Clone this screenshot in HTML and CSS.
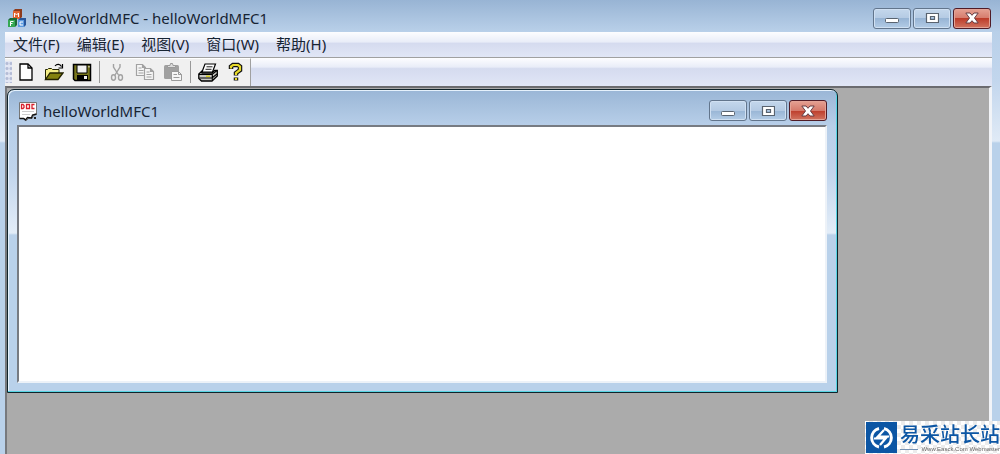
FILE: index.html
```html
<!DOCTYPE html>
<html lang="zh-CN">
  <head>
    <meta charset="UTF-8" />
    <meta name="viewport" content="width=device-width, initial-scale=1.0" />
    <title>helloWorldMFC - helloWorldMFC1</title>
    <link rel="stylesheet" href="styles.css">
  </head>
  <body>
    <div class="frame">
      <header class="titlebar">
        <svg class="app-icon" width="20" height="20" viewBox="0 0 20 20">
          <path d="M6 3l2-2h7v8l-2 2H6z" fill="#8e3b1c" />
          <path d="M6 3h7v8H6z" fill="#e0622e" />
          <path d="M7.500 9V5l2 2 2-2v4" fill="none" stroke="#fff" />
          <path d="M1 12l2-2h7v7l-2 2H1z" fill="#1d6b35" />
          <path d="M1 12h7v7H1z" fill="#35a852" />
          <path d="M3.500 18v-4.500h3M3.500 15.500h2" fill="none" stroke="#fff" />
          <path d="M11 12l2-2h6v7l-2 2h-6z" fill="#28569b" />
          <path d="M11 12h6v7h-6z" fill="#5d9be0" />
          <path d="M16 14h-3v3h3" fill="none" stroke="#fff" />
        </svg>
        <h1 class="title">helloWorldMFC - helloWorldMFC1</h1>
        <div class="controls">
          <button class="ctl" aria-label="最小化">
            <svg width="14" height="12" viewBox="0 0 14 12"><rect x=".5" y="6.500" width="13" height="4" rx="1" fill="#fff" stroke="#59636f" /></svg>
          </button>
          <button class="ctl" aria-label="最大化">
            <svg width="14" height="12" viewBox="0 0 14 12"><path d="M1.500 1.500h12v9h-12zM5.500 4.500v3h4v-3z" fill="#fff" fill-rule="evenodd" stroke="#59636f" stroke-width="1.200" /></svg>
          </button>
          <button class="ctl close" aria-label="关闭">
            <svg width="14" height="12" viewBox="0 0 14 12"><path d="M.8 1h4.200l2 2.300L9 1h4.200L9.500 6l3.700 5H9L7 8.700 5 11H.8l3.700-5z" fill="#fff" stroke="#653c43" /></svg>
          </button>
        </div>
      </header>

      <nav class="menubar">
        <button class="menu-item">文件(F)</button>
        <button class="menu-item">编辑(E)</button>
        <button class="menu-item">视图(V)</button>
        <button class="menu-item">窗口(W)</button>
        <button class="menu-item">帮助(H)</button>
      </nav>

      <div class="toolbar-row">
        <div class="toolbar">
          <span class="grip"></span>
          <button class="tool" aria-label="新建">
            <svg width="20" height="20" viewBox="0 0 20 20"><path d="M4 2h8l4 4v12H4z" fill="#fff" stroke="#000" stroke-width="1.300" /><path d="M12 2v4h4" fill="none" stroke="#000" stroke-width="1.300" /></svg>
          </button>
          <button class="tool" aria-label="打开">
            <svg width="20" height="20" viewBox="0 0 20 20">
              <path d="M1.500 17V7.500h2l1-1h3l1 1H15V11" fill="#f4ee86" stroke="#222200" />
              <path d="M1.500 17.500L6 11h13l-5 6.500z" fill="#84820e" stroke="#222200" stroke-width="1.300" />
              <path d="M11 4c2-2.500 5-2 6.500.5M18.500 2v4h-4" fill="none" stroke="#000" stroke-width="1.200" />
            </svg>
          </button>
          <button class="tool" aria-label="保存">
            <svg width="20" height="20" viewBox="0 0 20 20">
              <path d="M1.500 2.500h17v16H3l-1.500-1.500z" fill="#77751c" stroke="#000" stroke-width="1.500" />
              <path d="M5 3h10v8H5z" fill="#f1f1f1" stroke="#000" />
              <path d="M5 13h11v5H5z" fill="#000" />
              <path d="M12 14h3v3h-3z" fill="#eee" />
              <path d="M16.500 4h1v1.500h-1z" fill="#fff" />
            </svg>
          </button>
          <span class="sep"></span>
          <button class="tool" aria-label="剪切" disabled>
            <svg width="20" height="20" viewBox="0 0 20 20" fill="none" stroke="#a2a2a2" stroke-width="1.400">
              <path d="M6.500 2v3l5 8M13 2v3l-5 8" />
              <ellipse cx="6.500" cy="15.500" rx="2" ry="2.700" /><ellipse cx="13.500" cy="15.500" rx="2" ry="2.700" />
            </svg>
          </button>
          <button class="tool" aria-label="复制" disabled>
            <svg width="20" height="20" viewBox="0 0 20 20" fill="#f5f5f5" stroke="#a2a2a2" stroke-width="1.200">
              <path d="M1.500 2.500h6l3 3v8h-9zM7.500 2.500v3h3M3.500 6h3M3.500 8.500h5M3.500 11h5" />
              <path d="M9.500 6.500h6l3 3v8h-9zM15.500 6.500v3h3M11.500 10h3M11.500 12.500h5M11.500 15h5" />
            </svg>
          </button>
          <button class="tool" aria-label="粘贴" disabled>
            <svg width="20" height="20" viewBox="0 0 20 20">
              <rect x="1" y="3" width="15" height="14" rx="1.500" fill="#a0a0a0" />
              <path d="M4.500 5.500V3.500H7L7.500 1.500h2l.5 2h2.500v2z" fill="#ddd" stroke="#999" />
              <path d="M8.500 9.500h7l3 3v6h-10zM15.500 9.500v3h3M10.500 12.500h3.500M10.500 15.500h6" fill="#f5f5f5" stroke="#999" />
            </svg>
          </button>
          <span class="sep"></span>
          <button class="tool" aria-label="打印">
            <svg width="20" height="20" viewBox="0 0 20 20">
              <path d="M4 10L7 2h10.500l-3 8z" fill="#fff" stroke="#000" stroke-width="1.200" />
              <path d="M8.500 4.800h6M7.500 7.300h6" stroke="#222" />
              <path d="M3.500 9.500L.8 12v4.500L3.500 19H14l5.300-5V8.500h-2.800L14 11H4z" fill="#c9c9c4" stroke="#000" stroke-width="1.300" />
              <path d="M1 12.500h13l5-4M14.300 12.500V18M1.500 16h12.500l5-4" fill="none" stroke="#000" stroke-width="1.100" />
              <path d="M8 14.300h4" stroke="#d6cf22" stroke-width="1.500" />
            </svg>
          </button>
          <button class="tool" aria-label="关于">
            <svg width="20" height="20" viewBox="0 0 20 20">
              <path d="M5 7V4.500L7 3h5l2 1.500V8l-4 3v2.500M10 15.500v3" fill="none" stroke="#111" stroke-width="4.500" />
              <path d="M5 6.500v-2L7 3h5l2 1.500V8l-4 3v2M10 16v2" fill="none" stroke="#e7d929" stroke-width="2.200" />
            </svg>
          </button>
        </div>
      </div>

      <main class="workspace">
        <section class="child">
          <header class="child-titlebar">
            <svg class="doc-icon" width="20" height="20" viewBox="0 0 20 20">
              <path d="M1.500 1.500h17v12l-3 1-1 2.500-4 .5-2 2-2-2H1.500z" fill="#fff" stroke="#777" />
              <path d="M1.500 17.500h4l2 1.500 2-2.500 4 .5 1-3 4-1" fill="none" stroke="#111" stroke-width="1.400" />
              <path d="M3.500 3.500v4h1.500l1-1v-2l-1-1zM8.500 3.500h3v4h-3zM16.500 3.500h-2.500v4h2.500" fill="none" stroke="#d8202c" stroke-width="1.300" />
              <path d="M4 10.500h12M4 13.500h8" stroke="#ccc" />
              <path d="M16 16h2v2h-2z" fill="#222" />
            </svg>
            <h2 class="title">helloWorldMFC1</h2>
            <div class="controls">
              <button class="ctl" aria-label="最小化">
                <svg width="14" height="12" viewBox="0 0 14 12"><rect x=".5" y="6.500" width="13" height="4" rx="1" fill="#fff" stroke="#59636f" /></svg>
              </button>
              <button class="ctl" aria-label="最大化">
                <svg width="14" height="12" viewBox="0 0 14 12"><path d="M1.500 1.500h12v9h-12zM5.500 4.500v3h4v-3z" fill="#fff" fill-rule="evenodd" stroke="#59636f" stroke-width="1.200" /></svg>
              </button>
              <button class="ctl close" aria-label="关闭">
                <svg width="14" height="12" viewBox="0 0 14 12"><path d="M.8 1h4.200l2 2.300L9 1h4.200L9.500 6l3.700 5H9L7 8.700 5 11H.8l3.700-5z" fill="#fff" stroke="#653c43" /></svg>
              </button>
            </div>
          </header>
          <div class="document"></div>
        </section>
      </main>
    </div>

    <div class="watermark">
      <svg class="mark" width="31" height="31" viewBox="0 0 31 31">
        <path d="M0 0h31v31H0z" fill="#0c56a4" />
        <path d="M13 6.500a9.500 9.500 0 0 0 0 18.500M18 6.500a9.500 9.500 0 0 1 0 18.500" fill="none" stroke="#fff" stroke-width="3" />
        <path d="M18 8l-6 6.500h11M8 16.500h11.500L14 23" fill="none" stroke="#fff" stroke-width="2.200" />
      </svg>
      <div class="mark-text">
        <span class="mark-name">易采站长站</span>
        <span class="mark-url">Www.Easck.Com Webmaster</span>
      </div>
    </div>
  </body>
</html>
```
FILE: styles.css
```css
* {
  box-sizing: border-box;
}

body {
  margin: 0;
  font-family: "Noto Sans", "Noto Sans CJK SC", sans-serif;
  font-size: 15px;
  color: #172433;
}

button {
  padding: 0;
  border: none;
  background: none;
  font: inherit;
  color: inherit;
}

svg {
  display: block;
}

/* main window */
.frame {
  display: flex;
  flex-direction: column;
  min-height: 100vh;
  padding: 0 8px 0 5px;
  background: linear-gradient(#98b4d4 0, #b9d0e9 32px, #c2d6ed 80px, #e0eaf6 141px, #b9d1ea 143px);
}

.titlebar {
  display: flex;
  align-items: center;
  height: 32px;
  padding: 4px 1px 0 2px;
}

.title {
  flex: 1;
  margin: 0;
  padding-left: 5px;
  font-size: 15px;
  font-weight: normal;
  line-height: 20px;
}

.controls {
  display: flex;
  gap: 2px;
}

.ctl {
  display: flex;
  align-items: center;
  justify-content: center;
  width: 38px;
  height: 21px;
  border: 1px solid #62758c;
  border-radius: 3px;
  background: linear-gradient(#c4d7ec 0, #b4cae3 50%, #98b5d5 50%, #b3cce6 100%);
  box-shadow: inset 0 0 0 1px #d0e0f2;
}

.ctl.close {
  border-color: #501c27;
  background: linear-gradient(#e5a193 0, #d57a6b 50%, #bd3c2a 50%, #d17460 100%);
  box-shadow: inset 0 0 0 1px #e3a396;
}

.menubar {
  display: flex;
  gap: 17px;
  height: 25px;
  padding-left: 8px;
  background: linear-gradient(#fdfdff 0, #e9edf8 40%, #d5dbef 45%, #e1e6f6 100%);
}

.menu-item {
  height: 23px;
  line-height: 22px;
}

.toolbar-row {
  height: 29px;
  border-top: 1px solid #a0a0a0;
  background: linear-gradient(#fdfdff 0, #e9edf8 32%, #d5dbef 38%, #e1e6f6 100%);
}

.toolbar {
  display: inline-flex;
  align-items: center;
  height: 28px;
  padding-bottom: 2px;
  border-top: 1px solid #fff;
  border-right: 1px solid #a0a0a0;
  background: #f0f0f0;
}

.grip {
  width: 7px;
  height: 22px;
  background: radial-gradient(circle, #b4bcd6 1px, #e3e7f4 2px) 0 0 / 4px 5px;
}

.tool {
  display: flex;
  align-items: center;
  justify-content: center;
  width: 28px;
  height: 24px;
}

.sep {
  width: 7px;
  height: 22px;
  background: linear-gradient(#999, #999) center / 1px 100% no-repeat;
}

.workspace {
  flex: 1;
  padding: 1px 0 20px;
  border-top: 2px solid #6b6b6f;
  border-left: 2px solid #77797d;
  border-right: 3px solid #f2f4f8;
  background: #ababab;
}

/* document window */
.child {
  width: 84.6%;
  padding: 0 10px 9px 9px;
  border: 1px solid #10242b;
  border-radius: 7px 7px 0 0;
  background: linear-gradient(#9ab6d6 0, #b8cfe9 36px, #c0d4ec 80px, #e3edf8 143px, #b9d1ea 145px);
  box-shadow: inset -1px -1px #57d4e3, inset 1px 1px #e5f1fc;
}

.child-titlebar {
  display: flex;
  align-items: center;
  height: 35px;
  padding: 6px 0 0 1px;
}

.document {
  min-height: 258px;
  border: 2px solid;
  border-color: #777b82 #edf2f8 #edf2f8 #777b82;
  background: #fff;
}

/* corner logo */
.watermark {
  position: fixed;
  right: 0;
  bottom: 0;
  display: flex;
  align-items: center;
  gap: 3px;
  height: 33px;
  padding-left: 1px;
  background: repeating-conic-gradient(#ececec 0 25%, #fff 0 50%) 0 0 / 8px 8px;
}

.mark-text {
  display: flex;
  flex-direction: column;
}

.mark-name {
  font-family: "Noto Sans CJK SC", sans-serif;
  font-size: 20px;
  font-weight: 500;
  line-height: 23px;
  color: #0c56a4;
}

.mark-url {
  display: flex;
  align-items: center;
  gap: 3px;
  font-family: "Liberation Sans", sans-serif;
  font-size: 6px;
  line-height: 8px;
  color: #666;
}

.mark-url::before {
  content: "";
  flex: 1;
  height: 1px;
  background: #7793b5;
}
```
